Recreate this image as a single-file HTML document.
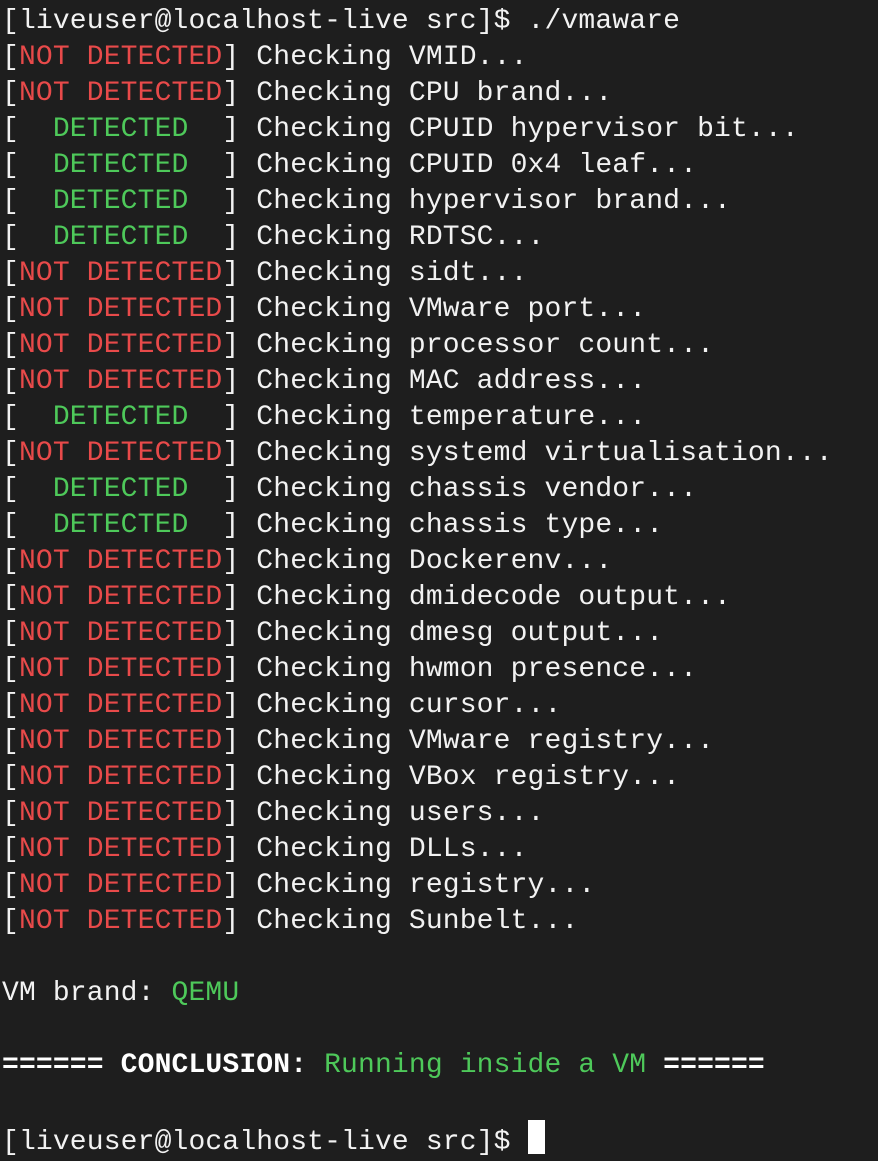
<!DOCTYPE html>
<html><head><meta charset="utf-8"><style>
html,body{margin:0;padding:0;background:#1e1e1e;width:878px;height:1159px;overflow:hidden}
pre{margin:0;position:absolute;left:2px;top:4px;font-family:"Liberation Mono","DejaVu Sans Mono",monospace;font-size:28px;line-height:36px;letter-spacing:0.15px;color:#f2f2f2}
.r{color:#e84a4a}.g{color:#4ec95a}b{font-weight:bold;color:#fff}
.cur{display:inline-block;width:17px;height:34px;background:#fff;vertical-align:-5px}
</style></head><body><pre>[liveuser@localhost-live src]$ ./vmaware
[<span class="r">NOT DETECTED</span>] Checking VMID...
[<span class="r">NOT DETECTED</span>] Checking CPU brand...
[  <span class="g">DETECTED</span>  ] Checking CPUID hypervisor bit...
[  <span class="g">DETECTED</span>  ] Checking CPUID 0x4 leaf...
[  <span class="g">DETECTED</span>  ] Checking hypervisor brand...
[  <span class="g">DETECTED</span>  ] Checking RDTSC...
[<span class="r">NOT DETECTED</span>] Checking sidt...
[<span class="r">NOT DETECTED</span>] Checking VMware port...
[<span class="r">NOT DETECTED</span>] Checking processor count...
[<span class="r">NOT DETECTED</span>] Checking MAC address...
[  <span class="g">DETECTED</span>  ] Checking temperature...
[<span class="r">NOT DETECTED</span>] Checking systemd virtualisation...
[  <span class="g">DETECTED</span>  ] Checking chassis vendor...
[  <span class="g">DETECTED</span>  ] Checking chassis type...
[<span class="r">NOT DETECTED</span>] Checking Dockerenv...
[<span class="r">NOT DETECTED</span>] Checking dmidecode output...
[<span class="r">NOT DETECTED</span>] Checking dmesg output...
[<span class="r">NOT DETECTED</span>] Checking hwmon presence...
[<span class="r">NOT DETECTED</span>] Checking cursor...
[<span class="r">NOT DETECTED</span>] Checking VMware registry...
[<span class="r">NOT DETECTED</span>] Checking VBox registry...
[<span class="r">NOT DETECTED</span>] Checking users...
[<span class="r">NOT DETECTED</span>] Checking DLLs...
[<span class="r">NOT DETECTED</span>] Checking registry...
[<span class="r">NOT DETECTED</span>] Checking Sunbelt...

VM brand: <span class="g">QEMU</span>

<b>====== CONCLUSION: </b><span class="g">Running inside a VM</span><b> ======</b>

[liveuser@localhost-live src]$ <span class="cur"></span></pre></body></html>
